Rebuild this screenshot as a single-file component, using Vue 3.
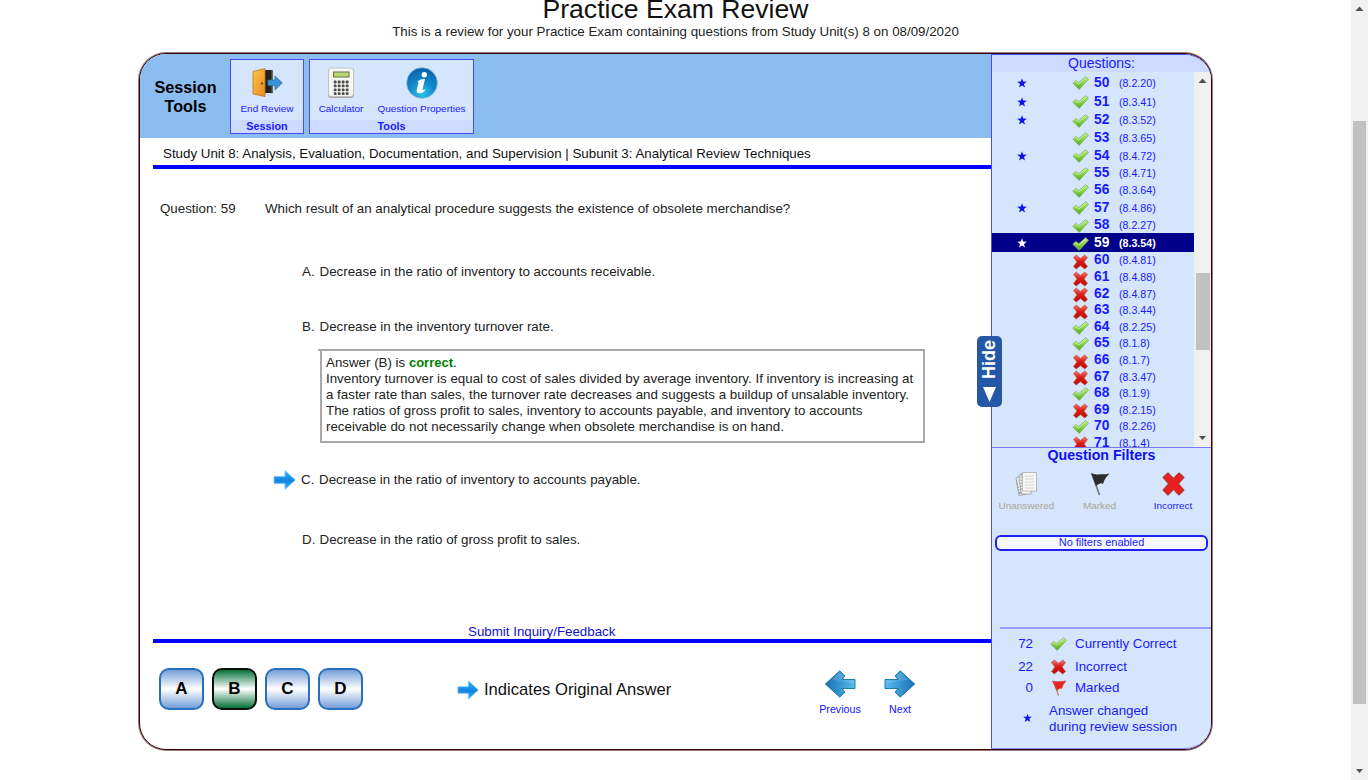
<script setup>
const rows = [
  [50, '8.2.20', 1, 1], [51, '8.3.41', 1, 1], [52, '8.3.52', 1, 1], [53, '8.3.65', 1, 0],
  [54, '8.4.72', 1, 1], [55, '8.4.71', 1, 0], [56, '8.3.64', 1, 0], [57, '8.4.86', 1, 1],
  [58, '8.2.27', 1, 0], [59, '8.3.54', 1, 1], [60, '8.4.81', 0, 0], [61, '8.4.88', 0, 0],
  [62, '8.4.87', 0, 0], [63, '8.3.44', 0, 0], [64, '8.2.25', 1, 0], [65, '8.1.8', 1, 0],
  [66, '8.1.7', 0, 0], [67, '8.3.47', 0, 0], [68, '8.1.9', 1, 0], [69, '8.2.15', 0, 0],
  [70, '8.2.26', 1, 0], [71, '8.1.4', 0, 0],
].map(([num, ref, ok, star]) => ({ num, ref, ok, star }))
const current = 59
const letters = ['A', 'B', 'C', 'D']
</script>

<template>
  <div class="page">
    <svg class="defs" width="0" height="0">
      <defs>
        <linearGradient id="gCheck" x1="0" y1="0" x2="0" y2="1"><stop offset="0" stop-color="#c0ec86" /><stop offset=".5" stop-color="#8bd343" /><stop offset="1" stop-color="#4fa41a" /></linearGradient>
        <linearGradient id="gCross" x1="0" y1="0" x2="0" y2="1"><stop offset="0" stop-color="#f47a70" /><stop offset=".45" stop-color="#dc1a12" /><stop offset="1" stop-color="#b80c08" /></linearGradient>
        <linearGradient id="gArrow" x1="0" y1="0" x2="0" y2="1"><stop offset="0" stop-color="#2bb4fa" /><stop offset=".55" stop-color="#1583df" /><stop offset="1" stop-color="#35b4f5" /></linearGradient>
        <linearGradient id="gNav" x1="0" y1="0" x2="1" y2="0"><stop offset="0" stop-color="#55bdee" /><stop offset="1" stop-color="#1b6fb4" /></linearGradient>
        <linearGradient id="gDoor" x1="0" y1="0" x2="1" y2="1"><stop offset="0" stop-color="#ffc34d" /><stop offset="1" stop-color="#e88b1f" /></linearGradient>
        <radialGradient id="gInfo" cx=".5" cy=".85" r=".8"><stop offset="0" stop-color="#2ec3ee" /><stop offset=".5" stop-color="#148bcb" /><stop offset="1" stop-color="#0a63ac" /></radialGradient>
      </defs>
      <symbol id="check" viewBox="0 0 17 14">
        <path d="M.8 7.200 3.900 4.400 6.700 6.700 13.600 .7 16.500 3.200 7.200 13.400z" fill="url(#gCheck)" stroke="#7fae68" stroke-width=".8" stroke-linejoin="round" />
        <path d="M2.200 7.100 3.900 5.500 6.800 7.900 13.700 1.900" fill="none" stroke="#dcf8b8" stroke-width=".7" />
      </symbol>
      <symbol id="cross" viewBox="0 0 16 16">
        <path d="M1 3.600 3.700 1 8 4.400 12.300 1 15 3.600 11.500 8 15 12.400 12.300 15 8 11.600 3.700 15 1 12.400 4.500 8z" fill="url(#gCross)" stroke="#b8504c" stroke-width=".7" stroke-linejoin="round" />
      </symbol>
      <symbol id="arrow" viewBox="0 0 23 20">
        <path d="M1 6.600h11V.7L22.300 10 12 19.300v-5.900H1z" fill="url(#gArrow)" stroke="#64bdf4" stroke-width=".7" />
      </symbol>
      <symbol id="nav" viewBox="0 0 32 28">
        <path d="M1 9.500h13L11 6l5.200-5.200L30.700 14 16.200 27.200 11 22l3-3.500H1z" fill="url(#gNav)" stroke="#1670a8" stroke-width=".9" />
        <path d="M2 13.500V10.500h13l-2.500-4.300 3.800-3.800L24 9.500Q14 11 2 13.500z" fill="#fff" opacity=".14" />
      </symbol>
      <symbol id="star" viewBox="0 0 10 10">
        <path d="M5 .2 6.200 3.600 9.800 3.700 6.950 5.900 8 9.500 5 7.400 2 9.500 3.050 5.900 .2 3.700 3.800 3.600z" />
      </symbol>
    </svg>

    <div class="content">
      <h1>Practice Exam Review</h1>
      <div class="intro">This is a review for your Practice Exam containing questions from Study Unit(s) 8 on 08/09/2020</div>

      <div class="frame">
        <main>
          <header>
            <div class="label">Session<br />Tools</div>
            <section class="group session">
              <div class="tools">
                <div class="tool">
                  <svg width="32" height="32" viewBox="0 0 32 32">
                    <path d="M11 3h10.500v23H11z" fill="#222" /><path d="M20 3.300h1.500v23H20" fill="#4c463c" />
                    <path d="M2 4.500 14 1.600V29.500L2 27z" fill="url(#gDoor)" stroke="#b87720" stroke-width=".8" />
                    <circle cx="11" cy="16.500" r="1.200" fill="#8b4f0b" />
                    <path d="M17 13h7V9l7.300 6.800L24 23v-4.400h-7z" fill="#3c94d4" stroke="#236aa5" stroke-width=".7" />
                  </svg>
                  <span>End Review</span>
                </div>
              </div>
              <b>Session</b>
            </section>
            <section class="group toolset">
              <div class="tools">
                <div class="tool calc">
                  <svg width="32" height="32" viewBox="0 0 32 32">
                    <rect x="3" y="1.500" width="26" height="29.500" rx="3" fill="#aaa" /><rect x="3.500" y="1" width="25" height="28.500" rx="3" fill="#f5f5f1" stroke="#bbb" stroke-width=".8" />
                    <rect x="8.500" y="5" width="15.500" height="5" fill="#b9d779" stroke="#677342" />
                    <g v-for="r in 4" :key="r"><rect v-for="c in 4" :key="c" :x="4.700 + c * 4" :y="9.700 + r * 3.900" width="2.900" height="2.800" rx="1" fill="#4b4b4b" /></g>
                  </svg>
                  <span>Calculator</span>
                </div>
                <div class="tool props">
                  <svg width="32" height="32" viewBox="0 0 32 32">
                    <circle cx="16" cy="16" r="15.300" fill="url(#gInfo)" stroke="#79b8d8" stroke-width=".8" />
                    <circle cx="18.300" cy="7.800" r="2.700" fill="#fff" />
                    <path d="M11.500 14.500q4-3 7.500-2.300-1 4-2.400 9.500-.4 2.300 2.900.5-.8 3-5.200 4-4.300.4-3.600-3.500l1.900-7z" fill="#fff" />
                  </svg>
                  <span>Question Properties</span>
                </div>
              </div>
              <b>Tools</b>
            </section>
          </header>

          <div class="unit">Study Unit 8: Analysis, Evaluation, Documentation, and Supervision | Subunit 3: Analytical Review Techniques</div>
          <div class="question"><span>Question: 59</span><p>Which result of an analytical procedure suggests the existence of obsolete merchandise?</p></div>

          <div class="answers">
            <div class="ans a"><i>A.</i>Decrease in the ratio of inventory to accounts receivable.</div>
            <div class="ans b"><i>B.</i>Decrease in the inventory turnover rate.</div>
            <div class="explain">
              Answer (B) is <strong>correct</strong>.<br />
              Inventory turnover is equal to cost of sales divided by average inventory. If inventory is increasing at<br />
              a faster rate than sales, the turnover rate decreases and suggests a buildup of unsalable inventory.<br />
              The ratios of gross profit to sales, inventory to accounts payable, and inventory to accounts<br />
              receivable do not necessarily change when obsolete merchandise is on hand.
            </div>
            <div class="ans c"><svg width="23" height="20"><use href="#arrow" /></svg><i>C.</i>Decrease in the ratio of inventory to accounts payable.</div>
            <div class="ans d"><i>D.</i>Decrease in the ratio of gross profit to sales.</div>
          </div>

          <div class="feedback"><a>Submit Inquiry/Feedback</a></div>
          <footer>
            <div class="letters"><button v-for="l in letters" :key="l" :class="{ right: l === 'B' }">{{ l }}</button></div>
            <div class="legend"><svg width="22" height="20"><use href="#arrow" /></svg>Indicates Original Answer</div>
            <div class="nav prev"><svg width="32" height="28" viewBox="0 0 32 28"><use href="#nav" width="32" height="28" transform="translate(32 0) scale(-1 1)" /></svg>Previous</div>
            <div class="nav next"><svg width="32" height="28"><use href="#nav" /></svg>Next</div>
          </footer>
        </main>

        <aside>
          <div class="qhead">Questions:</div>
          <div class="listwrap">
            <div class="list">
              <div v-for="r in rows" :key="r.num" class="row" :class="{ starred: r.star, current: r.num === current }">
                <svg class="star" width="10" height="10"><use v-if="r.star" href="#star" /></svg>
                <svg v-if="r.ok" class="mark" width="17" height="14"><use href="#check" /></svg>
                <svg v-else class="mark wrong" width="17" height="16"><use href="#cross" /></svg>
                <b>{{ r.num }}</b><span>({{ r.ref }})</span>
              </div>
            </div>
            <div class="bar">
              <svg width="17" height="17"><path d="M4.500 11 8.500 6.500 12.500 11z" fill="#505050" /></svg>
              <div class="thumb"></div>
              <svg width="17" height="17"><path d="M5 6h7L8.500 10z" fill="#505050" /></svg>
            </div>
          </div>
          <h2>Question Filters</h2>
          <div class="filters">
            <div class="off">
              <svg width="25" height="26" viewBox="0 0 25 26">
                <path d="M2 7 9 4 13 23 5 24.500z" fill="#eee" stroke="#999" stroke-width=".8" /><path d="M5 4h12v19H7z" fill="#f7f7f5" stroke="#999" stroke-width=".8" />
                <path d="M8.500 1.500h14v18.500H8.500z" fill="#f8f8f6" stroke="#aaa" stroke-width=".8" /><path d="M11 5h9M11 8h9M11 11h9M11 14h9M11 17h9M4 9l2-.5M4.500 12l2-.5M5 15l2-.5M6 18l1.500-.5" stroke="#c4c4c4" stroke-width=".8" />
                <path d="M7 2.500v20M2.500 9.500 6 24" stroke="#929292" stroke-width="1.200" stroke-dasharray="1.500 1.500" />
              </svg>Unanswered
            </div>
            <div class="off">
              <svg width="25" height="26" viewBox="0 0 25 26"><path d="M5 3 12.500 24" stroke="#777" stroke-width="1.700" /><path d="M4 2q3 2 9 1.200 5 .5 9.500-.7Q17 8 16 13q-2.500-2-7 2z" fill="#2c2c2c" /></svg>Marked
            </div>
            <div><svg width="25" height="26" viewBox="0 0 25 26"><path d="M2 6.500 7 2 12.500 7.400 18 2 23 6.500 17.400 12.800 23 19 18 24 12.500 18.400 7 24 2 19 7.600 12.800z" fill="#e91f20" stroke="#a83b34" stroke-width="1.100" stroke-linejoin="round" /></svg>Incorrect</div>
          </div>
          <div class="status">No filters enabled</div>
          <div class="summary">
            <div class="s1"><em>72</em><svg width="17" height="14"><use href="#check" /></svg><span>Currently Correct</span></div>
            <div class="s2"><em>22</em><svg width="17" height="16"><use href="#cross" /></svg><span>Incorrect</span></div>
            <div class="s3"><em>0</em><svg width="17" height="16" viewBox="0 0 17 16"><path d="M4 2 8.500 15.500" stroke="#b48750" stroke-width="1.300" /><path d="M2.500 1q4 1.400 13.500 0-3.500 3.500-4.300 7.500-2-1.300-4.700 2z" fill="#e8251f" stroke="#c33" stroke-width=".5" /></svg><span>Marked</span></div>
            <div class="s4"><em><svg class="star" width="9" height="10"><use href="#star" /></svg></em><span>Answer changed<br />during review session</span></div>
          </div>
        </aside>
        <div class="hide">
          <b>Hide</b>
          <svg width="13" height="15"><path d="M0 0h13L6.500 15z" fill="#fff" /></svg>
        </div>
      </div>
    </div>

    <div class="scroll">
      <svg width="17" height="17"><path d="M4.500 11 8.500 6.500 12.500 11z" fill="#505050" /></svg>
      <div class="thumb"></div>
      <svg width="17" height="17"><path d="M5 6h7L8.500 10z" fill="#505050" /></svg>
    </div>
  </div>
</template>

<style>
html, body { overflow: hidden; background: #fff; }
</style>

<style scoped>
* { box-sizing: border-box; }
.page { display: flex; width: 1368px; height: 780px; overflow: hidden; font: 13.333px/16px "Liberation Sans", Arial, sans-serif; color: #222; }
.defs { position: absolute; }
svg { display: block; flex: none; }
.content { flex: 1; }
h1 { margin: -7px 0 0; font: 26.600px/32px "Liberation Sans", Arial, sans-serif; color: #111; text-align: center; white-space: nowrap; }
.intro { height: 28px; line-height: 14px; text-align: center; white-space: nowrap; }
.frame { position: relative; display: flex; width: 1073px; height: 697px; margin-left: 139px; border: 1px solid #300; border-radius: 27px; box-shadow: 0 0 0 1px rgba(51, 0, 0, .5); background: #fff; }
main { width: 851px; display: flex; flex-direction: column; white-space: nowrap; }
header { height: 84px; background: #8cbdf1; border-radius: 26px 0 0 0; display: flex; align-items: flex-start; padding: 5px 0 0; }
.label { width: 90px; padding-left: 1px; text-align: center; font-weight: bold; font-size: 16.200px; line-height: 19px; color: #000; padding-top: 19px; }
.group { height: 75px; border: 1px solid #4b4bf5; background: #d5e5fb; color: #1a1aff; display: flex; flex-direction: column; text-align: center; }
.session { width: 74px; }
.toolset { width: 165px; margin-left: 5px; }
.group b { height: 13px; line-height: 12px; background: #ccdbff; font-size: 10.800px; }
.tools { display: flex; flex: 1; padding-top: 7px; }
.tool { display: flex; flex-direction: column; align-items: center; width: 72px; font-size: 9.950px; line-height: 12px; }
.tool span { margin-top: 4px; }
.calc { width: 62px; }
.props { width: 99px; }
.unit { margin-left: 13px; padding: 8px 0 0 10px; height: 31px; line-height: 15px; border-bottom: 4px solid #00f; color: #111; }
.question { display: flex; padding: 32px 0 0 20px; height: 87px; }
.question span { width: 105px; }
.question p { margin: 0; }
.answers { height: 368px; }
.ans { display: flex; margin-left: 162px; height: 16px; margin-top: 8px; }
.ans i { font-style: normal; width: 17.500px; }
.ans.b { margin-top: 39px; }
.ans.c { margin: 27px 0 0 133px; height: 20px; line-height: 20px; align-items: center; }
.ans.c svg { margin-right: 5px; }
.ans.c i { width: 18px; }
.ans.d { margin-top: 42px; }
.explain { position: relative; width: 605px; height: 94px; margin: 14px 0 0 180px; padding: 4px 0 0 4px; border: 2px solid #a9a9a9; }
.explain::before { content: ''; position: absolute; left: -4px; top: -2px; width: 2px; height: 2px; background: #a9a9a9; }
strong { color: #008000; font-size: 13px; }
.feedback { height: 20px; line-height: 17px; margin-left: 13px; border-bottom: 4px solid #00f; padding-left: 315px; margin-top: -1px; }
.feedback a { color: #11c; }
footer { display: flex; padding: 25px 0 0 19px; }
.letters { display: flex; gap: 8px; width: 298px; }
button { width: 45px; height: 42px; padding: 0; border: 2px solid #2670bd; border-radius: 10px; background: linear-gradient(#759ed8, #fff 50%, #759ed8); font: bold 17px/38px "Liberation Sans", Arial, sans-serif; color: #000; }
button.right { border-color: #061009; background: linear-gradient(#06713a, #fff 50%, #06713a); }
.legend { display: flex; align-items: center; gap: 5px; height: 44px; font-size: 16.600px; width: 353px; color: #111; }
.nav { display: flex; flex-direction: column; align-items: center; width: 60px; color: #11f; font-size: 10.667px; padding-top: 2px; }
.nav svg { margin-bottom: 3px; }
aside { width: 220px; background: #d5e5fb; border-left: 1px solid #4b4bf5; border-top: 1px solid #4b4bf5; border-bottom: 1px solid #88f; border-radius: 0 26px 26px 0; overflow: hidden; color: #1a1aff; white-space: nowrap; }
.qhead { height: 17px; background: #ccdbff; text-align: center; font-size: 14px; line-height: 17px; }
.listwrap { display: flex; height: 376px; border-bottom: 1px solid #77f; overflow: hidden; }
.list { width: 202px; padding-top: 1px; }
.row { display: flex; align-items: center; height: 16.600px; }
.row.starred { height: 18.800px; }
.row.current { background: #00008b; color: #fff; }
.row .star { margin: 1px 0 0 25px; }
.star { fill: #1010f0; }
.current .star { fill: #fff; }
.row .mark { margin: 2px 5px 0 45px; }
.row .wrong { margin-top: 3px; }
.row b { font-size: 13.800px; width: 25px; }
.row.starred b { margin-top: 1px; }
.row span { font-size: 10.667px; margin-top: 1px; }
.row:not(.starred) span { margin-top: 0; }
.current span { font-weight: bold; }
.bar, .scroll { width: 17px; background: #f0f0f0; display: flex; flex-direction: column; }
.thumb { background: #c1c1c1; width: 14px; margin: 184px 0 0 2px; height: 77px; }
.bar svg:last-child { margin-top: auto; }
h2 { margin: 0; font-size: 14.200px; line-height: 15px; text-align: center; height: 23px; color: #1010f0; }
.filters { display: grid; grid-template-columns: 69px 77px 70px; height: 64px; font-size: 9.950px; line-height: 12px; }
.filters > div { display: flex; flex-direction: column; align-items: center; gap: 3px; }
.filters .off { color: #aaa798; }
.status { width: 213px; height: 16px; margin-left: 3px; border: 2px solid #2020f5; border-radius: 6px; background: #f7f7ff; font-size: 11px; line-height: 11px; text-align: center; }
.summary { margin: 76px 0 0 8px; border-top: 2px solid #99f; padding-top: 4px; }
.summary > div { display: flex; align-items: center; }
.summary em { width: 33px; text-align: right; font-style: normal; margin-right: 17px; }
.summary svg { margin-right: 8px; }
.summary .s1 { height: 22px; }
.summary .s2 { height: 23px; }
.summary .s3 { height: 20px; }
.summary .s4 { height: 38px; margin-top: 2px; }
.summary .s4 svg { margin: -2px 0 0 23px; }
.summary .s4 span { margin-left: -1px; line-height: 16px; }
.hide { position: absolute; left: 837px; top: 282px; width: 25px; height: 71px; border-radius: 5px; background: #2457a6; color: #fff; display: flex; flex-direction: column; align-items: center; padding-top: 4px; }
.hide b { writing-mode: vertical-rl; transform: rotate(180deg); height: 41px; font-size: 18px; line-height: 25px; margin-bottom: 6px; text-align: right; }
.scroll .thumb { width: 13px; height: 583px; margin-top: 104px; }
.scroll svg:last-child { margin-top: auto; }
</style>
